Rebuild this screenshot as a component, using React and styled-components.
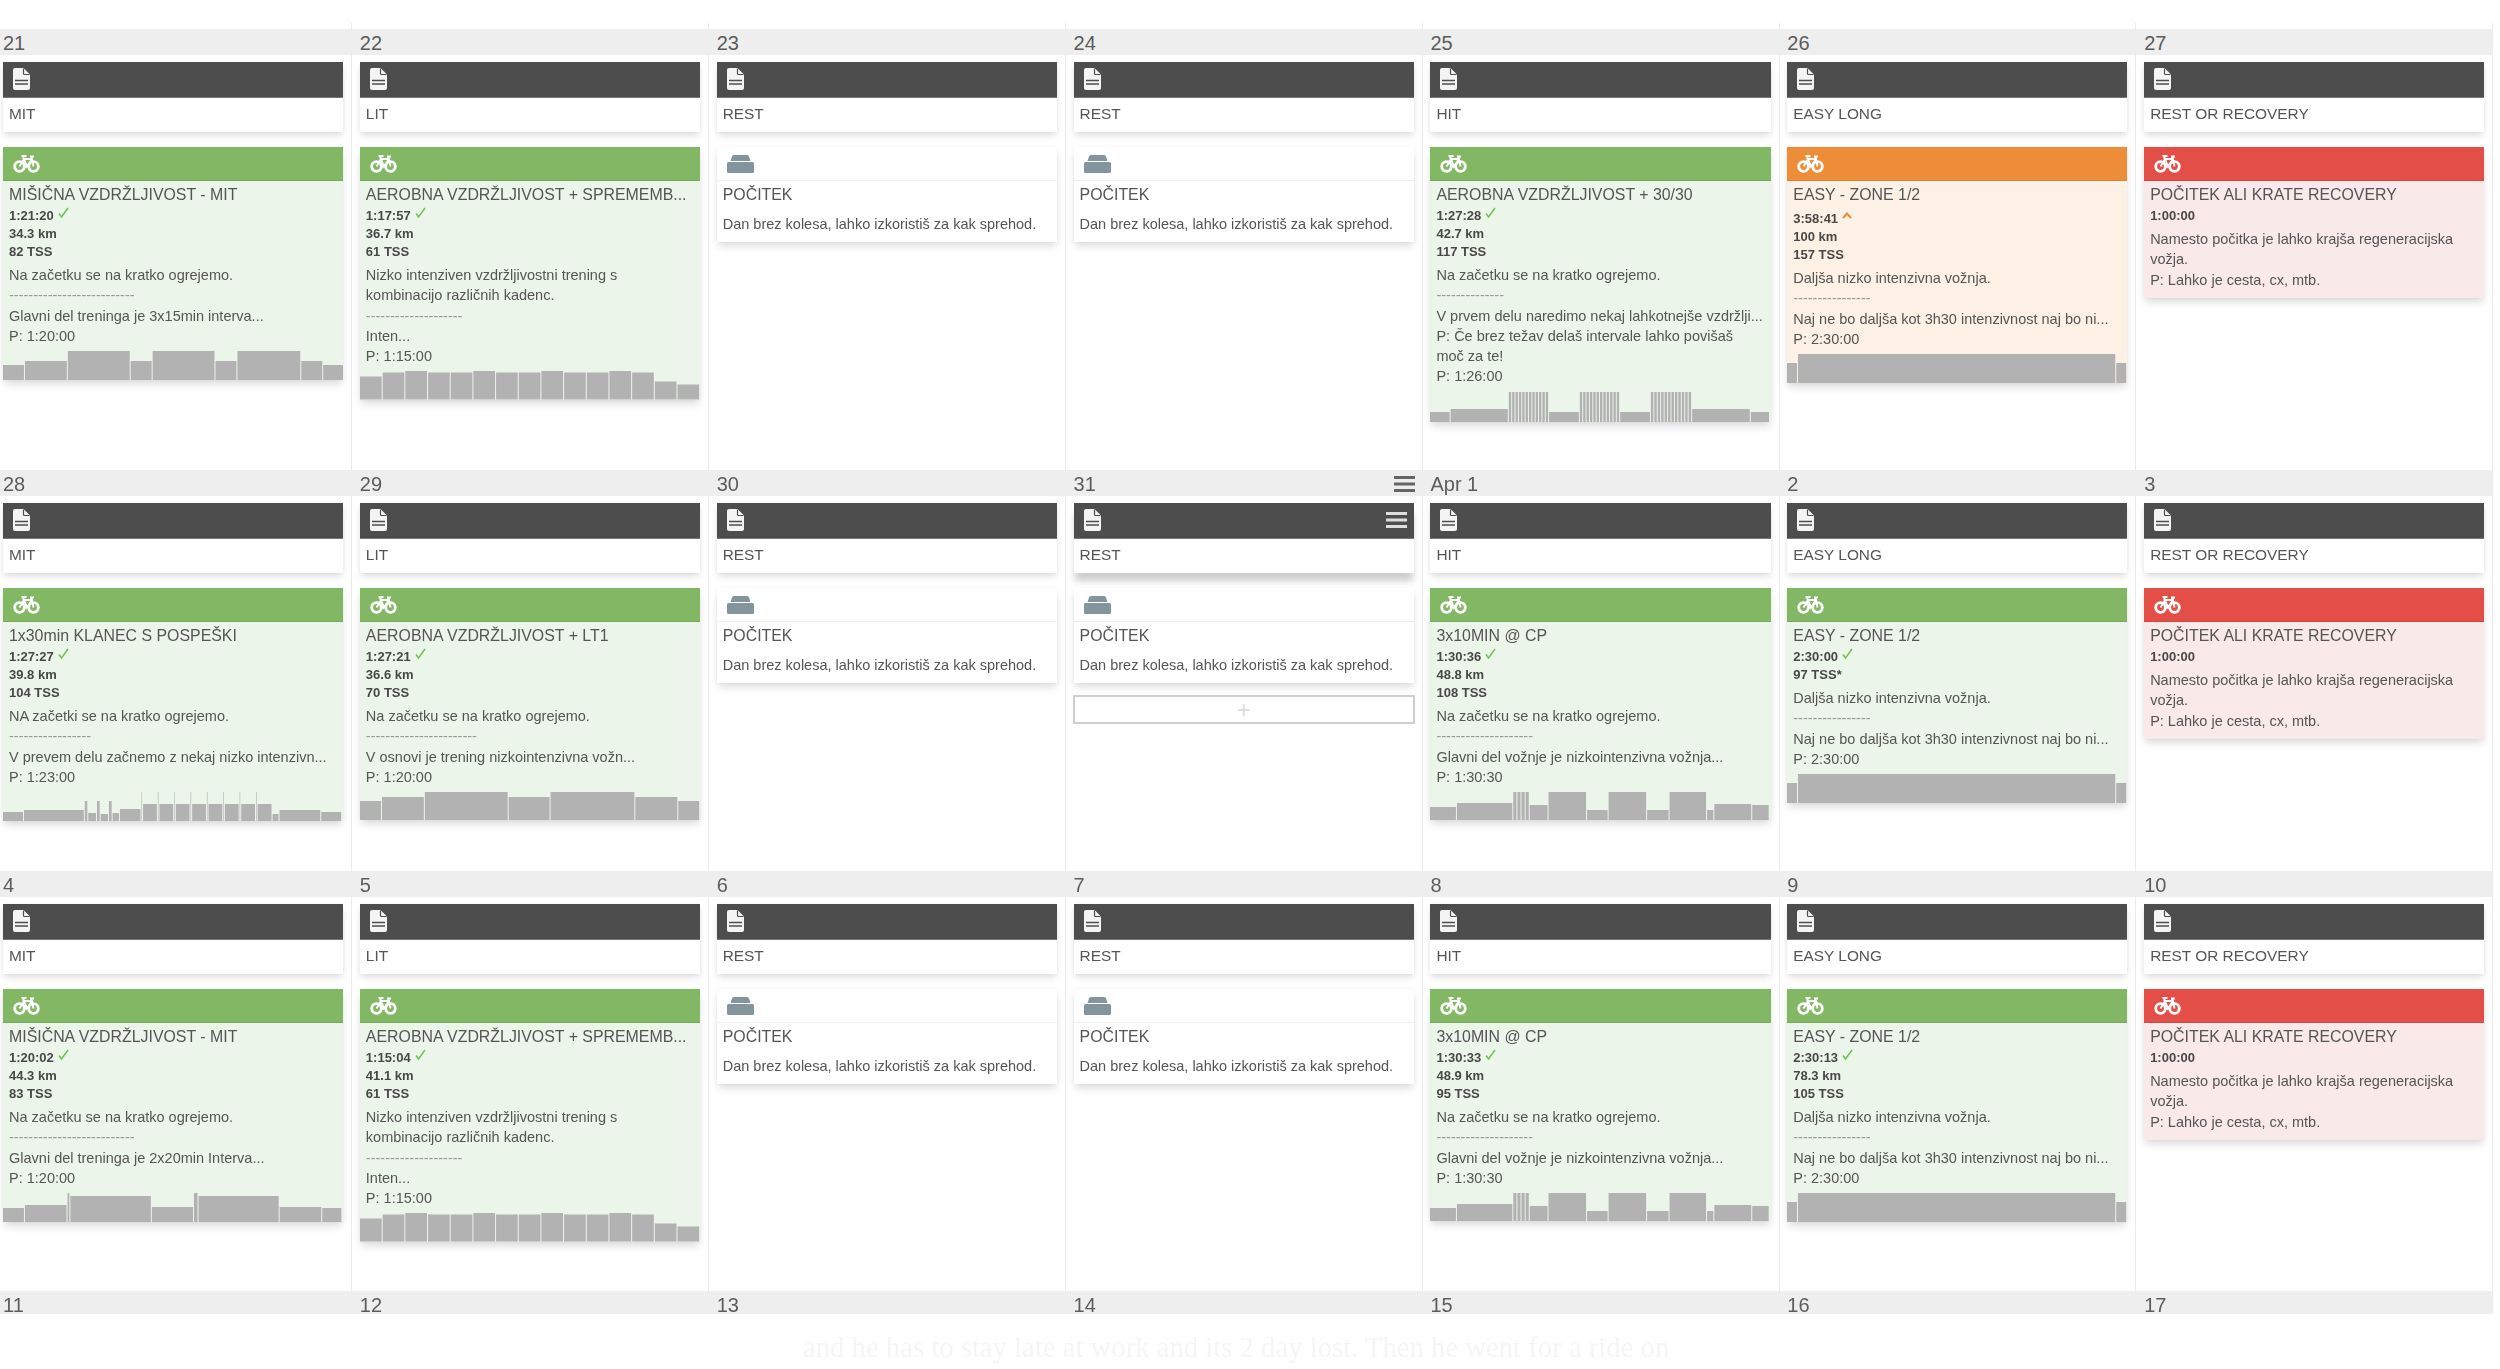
import React from 'react';
import styled, { createGlobalStyle, css } from 'styled-components';

const dashes = (n) => '-'.repeat(n);
const stripes = (total, n, h) => Array.from({ length: n }, () => [total / n, h]);

const WARMUP = 'Na začetku se na kratko ogrejemo.';
const LONG = 'Daljša nizko intenzivna vožnja.';
const LONG_NOTE = 'Naj ne bo daljša kot 3h30 intenzivnost naj bo ni...';
const MAIN_RIDE = 'Glavni del vožnje je nizkointenzivna vožnja...';

const CHART_MIT = [[22, 15], [43, 19], [63, 29], [22, 19], [63, 29], [22, 19], [64, 29], [22, 19], [21, 15]];
const CHART_CADENCE = [23, 27, 28.5, 27, 27, 28.5, 27, 27, 28.5, 27, 27, 28.5, 27, 18, 15].map((h) => [22.73, h]);
const CHART_3030 = [
  [20.7, 10], [58.3, 13], ...stripes(40.4, 12, 30), [30.8, 10], ...stripes(40.4, 12, 30), [30.8, 10],
  ...stripes(41.3, 12, 30), [58.8, 13], [19.3, 10],
];
const CHART_EASY = [[11, 20], [319, 29], [11, 20]];
const CHART_HILL = [
  [21, 9], [61, 11], [3.5, 20], [8.7, 8], [3.7, 20], [8.3, 7], [3.7, 20], [7.3, 8], [21.6, 12],
  ...Array.from({ length: 7 }).flatMap(() => [[1.6, 29], [14.8, 17]]),
  [1.6, 29], [15, 17], [7, 7], [41.8, 11], [21, 9],
];
const CHART_LT1 = [[22, 19], [43, 23], [84, 28], [42, 23], [85, 28], [43, 23], [22, 19]];
const CHART_CP = [
  [27, 13], [56.5, 17], ...stripes(16.5, 4, 28), [18.8, 15], [38.6, 28], [21.6, 10], [38.6, 28], [22.5, 10],
  [37.6, 28], [7.3, 10], [38, 16], [17.5, 15],
];
const CHART_2X20 = [[22, 14], [42.7, 17], [2.8, 29], [81.7, 26], [42.2, 15], [4.6, 29], [81.3, 26], [42.7, 15], [20.2, 14]];

const REST = { kind: 'rest', title: 'POČITEK', lines: ['Dan brez kolesa, lahko izkoristiš za kak sprehod.'] };
const RECOVERY = {
  kind: 'red',
  title: 'POČITEK ALI KRATE RECOVERY',
  stats: ['1:00:00'],
  lines: ['Namesto počitka je lahko krajša regeneracijska', 'vožja.', 'P: Lahko je cesta, cx, mtb.'],
};
const PLANS = ['MIT', 'LIT', 'REST', 'REST', 'HIT', 'EASY LONG', 'REST OR RECOVERY'];

const WEEKS = [
  {
    height: 415,
    labels: ['21', '22', '23', '24', '25', '26', '27'],
    workouts: [
      {
        kind: 'green', title: 'MIŠIČNA VZDRŽLJIVOST - MIT', stats: ['1:21:20', '34.3 km', '82 TSS'], mark: 'done',
        lines: [WARMUP, dashes(26), 'Glavni del treninga je 3x15min interva...', 'P: 1:20:00'], chart: CHART_MIT,
      },
      {
        kind: 'green', title: 'AEROBNA VZDRŽLJIVOST + SPREMEMB...', stats: ['1:17:57', '36.7 km', '61 TSS'], mark: 'done',
        lines: ['Nizko intenziven vzdržljivostni trening s', 'kombinacijo različnih kadenc.', dashes(20), 'Inten...', 'P: 1:15:00'],
        chart: CHART_CADENCE,
      },
      REST,
      REST,
      {
        kind: 'green', title: 'AEROBNA VZDRŽLJIVOST + 30/30', stats: ['1:27:28', '42.7 km', '117 TSS'], mark: 'done',
        lines: [WARMUP, dashes(14), 'V prvem delu naredimo nekaj lahkotnejše vzdržlji...', 'P: Če brez težav delaš intervale lahko povišaš', 'moč za te!', 'P: 1:26:00'],
        chart: CHART_3030,
      },
      {
        kind: 'orange', title: 'EASY - ZONE 1/2', stats: ['3:58:41', '100 km', '157 TSS'], mark: 'over',
        lines: [LONG, dashes(16), LONG_NOTE, 'P: 2:30:00'], chart: CHART_EASY,
      },
      RECOVERY,
    ],
  },
  {
    height: 375,
    labels: ['28', '29', '30', '31', 'Apr 1', '2', '3'],
    active: 3,
    workouts: [
      {
        kind: 'green', title: '1x30min KLANEC S POSPEŠKI', stats: ['1:27:27', '39.8 km', '104 TSS'], mark: 'done',
        lines: ['NA začetki se na kratko ogrejemo.', dashes(17), 'V prevem delu začnemo z nekaj nizko intenzivn...', 'P: 1:23:00'],
        chart: CHART_HILL,
      },
      {
        kind: 'green', title: 'AEROBNA VZDRŽLJIVOST + LT1', stats: ['1:27:21', '36.6 km', '70 TSS'], mark: 'done',
        lines: [WARMUP, dashes(23), 'V osnovi je trening nizkointenzivna vožn...', 'P: 1:20:00'], chart: CHART_LT1,
      },
      REST,
      REST,
      {
        kind: 'green', title: '3x10MIN @ CP', stats: ['1:30:36', '48.8 km', '108 TSS'], mark: 'done',
        lines: [WARMUP, dashes(20), MAIN_RIDE, 'P: 1:30:30'], chart: CHART_CP,
      },
      {
        kind: 'green', title: 'EASY - ZONE 1/2', stats: ['2:30:00', '97 TSS*'], mark: 'done',
        lines: [LONG, dashes(16), LONG_NOTE, 'P: 2:30:00'], chart: CHART_EASY,
      },
      RECOVERY,
    ],
  },
  {
    height: 394,
    labels: ['4', '5', '6', '7', '8', '9', '10'],
    workouts: [
      {
        kind: 'green', title: 'MIŠIČNA VZDRŽLJIVOST - MIT', stats: ['1:20:02', '44.3 km', '83 TSS'], mark: 'done',
        lines: [WARMUP, dashes(26), 'Glavni del treninga je 2x20min Interva...', 'P: 1:20:00'], chart: CHART_2X20,
      },
      {
        kind: 'green', title: 'AEROBNA VZDRŽLJIVOST + SPREMEMB...', stats: ['1:15:04', '41.1 km', '61 TSS'], mark: 'done',
        lines: ['Nizko intenziven vzdržljivostni trening s', 'kombinacijo različnih kadenc.', dashes(20), 'Inten...', 'P: 1:15:00'],
        chart: CHART_CADENCE,
      },
      REST,
      REST,
      {
        kind: 'green', title: '3x10MIN @ CP', stats: ['1:30:33', '48.9 km', '95 TSS'], mark: 'done',
        lines: [WARMUP, dashes(20), MAIN_RIDE, 'P: 1:30:30'], chart: CHART_CP,
      },
      {
        kind: 'green', title: 'EASY - ZONE 1/2', stats: ['2:30:13', '78.3 km', '105 TSS'], mark: 'done',
        lines: [LONG, dashes(16), LONG_NOTE, 'P: 2:30:00'], chart: CHART_EASY,
      },
      RECOVERY,
    ],
  },
];

function DocIcon() {
  return (
    <svg width="17" height="22" viewBox="0 0 17 22">
      <path d="M2 0h8.500L17 6.500V20a2 2 0 0 1-2 2H2a2 2 0 0 1-2-2V2a2 2 0 0 1 2-2z" fill="#f4f4f4" />
      <path d="M10.500 0.500v5a1 1 0 0 0 1 1h5" fill="none" stroke="#4d4d4d" strokeWidth="1.200" />
      <path d="M2 12.500h13M2 16h13" stroke="#4d4d4d" strokeWidth="1.400" />
    </svg>
  );
}

function BikeIcon() {
  return (
    <svg width="27" height="18" viewBox="0 0 27 18" fill="none" stroke="#fff">
      <circle cx="6.500" cy="11.500" r="4.800" strokeWidth="2.800" />
      <circle cx="20.500" cy="11.500" r="4.800" strokeWidth="2.800" />
      <path d="M6.500 11.500L11 4h8l1.500 7.500M11 4l3 7.500L19 4M12 11.500h2" strokeWidth="1.900" />
      <path d="M8.500 1h5M10.500 1v3M17 1.500h4M18.500 1.500V4" strokeWidth="2" />
    </svg>
  );
}

function RestIcon() {
  return (
    <svg width="27" height="18" viewBox="0 0 27 18" fill="#84949c">
      <path d="M7 0h13a2 2 0 0 1 2 1.500L23.500 6h-20L5 1.500A2 2 0 0 1 7 0z" />
      <path d="M1.500 7h24A1.500 1.500 0 0 1 27 8.500v8a1.500 1.500 0 0 1-1.500 1.500h-24A1.500 1.500 0 0 1 0 16.500v-8A1.500 1.500 0 0 1 1.500 7z" />
    </svg>
  );
}

function MenuIcon({ color }) {
  return (
    <svg width="21" height="16" viewBox="0 0 21 16" fill={color}>
      <rect width="21" height="3" />
      <rect y="6.500" width="21" height="3" />
      <rect y="13" width="21" height="3" />
    </svg>
  );
}

function Chart({ bars }) {
  const top = Math.max(...bars.map((b) => b[1]));
  let x = 0;
  return (
    <ChartBox viewBox={`0 0 341 ${top}`} preserveAspectRatio="none" $height={top}>
      {bars.map(([w, h], i) => {
        const rect = <rect key={i} x={x} y={top - h} width={Math.max(w - 1, 0.5)} height={h} fill="#b2b2b2" />;
        x += w;
        return rect;
      })}
    </ChartBox>
  );
}

function Workout({ kind, title, stats, mark, lines, chart }) {
  return (
    <WorkoutCard $kind={kind}>
      <WorkoutHead $kind={kind}>{kind === 'rest' ? <RestIcon /> : <BikeIcon />}</WorkoutHead>
      <WorkoutTitle>{title}</WorkoutTitle>
      {stats && (
        <Stats>
          {stats.map((stat, i) => (
            <Stat key={stat} $over={i === 0 && mark === 'over'}>
              {stat}
              {i === 0 && mark === 'done' && (
                <Mark width="11" height="11" viewBox="0 0 11 11" fill="none" stroke="#6fc353" strokeWidth="1.500">
                  <path d="M1 6.500l2.500 3.500L10 1" />
                </Mark>
              )}
              {i === 0 && mark === 'over' && (
                <Mark width="10" height="7" viewBox="0 0 10 7" fill="none" stroke="#ee8d38" strokeWidth="2">
                  <path d="M1 6l4-4.500L9 6" />
                </Mark>
              )}
            </Stat>
          ))}
        </Stats>
      )}
      <Notes $rest={kind === 'rest'} $chart={Boolean(chart)}>
        {lines.map((line, i) => (
          <Note key={i} $rule={line.startsWith('--')}>
            {line}
          </Note>
        ))}
      </Notes>
      {chart && <Chart bars={chart} />}
    </WorkoutCard>
  );
}

function Week({ week }) {
  return (
    <section>
      <Band>
        {week.labels.map((label, i) => (
          <DayLabel key={label}>
            {label}
            {week.active === i && <MenuIcon color="#666" />}
          </DayLabel>
        ))}
      </Band>
      <Columns $height={week.height}>
        {week.workouts.map((workout, i) => (
          <Column key={i}>
            <PlanCard $lifted={week.active === i}>
              <PlanHead>
                <DocIcon />
                {week.active === i && <MenuIcon color="#ddd" />}
              </PlanHead>
              <PlanTitle>{PLANS[i]}</PlanTitle>
            </PlanCard>
            <Workout {...workout} />
            {week.active === i && <AddBox>+</AddBox>}
          </Column>
        ))}
      </Columns>
    </section>
  );
}

export default function App() {
  return (
    <Page>
      <GlobalStyle />
      <TopStub>
        {PLANS.map((plan, i) => (
          <StubCell key={i} />
        ))}
      </TopStub>
      {WEEKS.map((week) => (
        <Week key={week.labels[0]} week={week} />
      ))}
      <Band $short>
        {['11', '12', '13', '14', '15', '16', '17'].map((label) => (
          <DayLabel key={label}>{label}</DayLabel>
        ))}
      </Band>
      <FadedText>and he has to stay late at work and its 2 day lost. Then he went for a ride on</FadedText>
    </Page>
  );
}

const GlobalStyle = createGlobalStyle`
  html, body {
    margin: 0;
    padding: 0;
    background: #fff;
    overflow: hidden;
  }
`;

const HEAD = {
  green: '#82b863',
  orange: '#ee8d38',
  red: '#e34f46',
  rest: '#fff',
};
const BODY = {
  green: '#ecf5ea',
  orange: '#fcf1e4',
  red: '#f9e9e9',
  rest: '#fff',
};

const weekGrid = css`
  display: grid;
  grid-template-columns: repeat(7, 1fr);
  margin-left: -4.67px;
  width: 2498px;
`;

const Page = styled.div`
  height: 1369px;
  padding-top: 23px;
  box-sizing: border-box;
  overflow: hidden;
  font-family: 'Liberation Sans', Arial, sans-serif;
  color: #555;
  filter: blur(0.6px);
`;
const TopStub = styled.div`
  ${weekGrid}
  height: 6px;
`;
const StubCell = styled.div`
  border-right: 1px solid #e8ebee;
`;
const Band = styled.div`
  ${weekGrid}
  height: ${(p) => (p.$short ? 23 : 26)}px;
  background: #eee;
`;
const DayLabel = styled.div`
  display: flex;
  justify-content: space-between;
  align-items: center;
  padding: 0 8px 0 7.670px;
  font-size: 20px;
  line-height: 28px;
  color: #5c5c5c;
`;
const Columns = styled.div`
  ${weekGrid}
  height: ${(p) => p.$height}px;
`;
const Column = styled.div`
  display: flex;
  flex-direction: column;
  padding: 7px 8px 0 7.670px;
  border-right: 1px solid #e8ebee;
  min-width: 0;
`;
const PlanCard = styled.div`
  background: #fff;
  box-shadow: ${(p) =>
    p.$lifted ? '0 9px 7px -1px rgba(0, 0, 0, 0.2)' : '0 4px 7px -1px rgba(0, 0, 0, 0.14), 0 0 3px rgba(0, 0, 0, 0.05)'};
`;
const PlanHead = styled.div`
  display: flex;
  justify-content: space-between;
  align-items: center;
  height: 36px;
  padding: 0 7px 2px 10px;
  box-sizing: border-box;
  background: #4d4d4d;
  border-bottom: 1px solid #777;
`;
const PlanTitle = styled.div`
  height: 34px;
  padding: 0 6px;
  font-size: 15.400px;
  line-height: 32px;
`;
const WorkoutCard = styled.div`
  margin-top: 15px;
  background: ${(p) => BODY[p.$kind]};
  box-shadow: 0 5px 8px -1px rgba(0, 0, 0, 0.14), 0 0 3px rgba(0, 0, 0, 0.05);
`;
const WorkoutHead = styled.div`
  display: flex;
  align-items: center;
  height: 34px;
  padding-left: 10px;
  box-sizing: border-box;
  background: ${(p) => HEAD[p.$kind]};
  border-bottom: 1px solid ${(p) => (p.$kind === 'rest' ? '#eee' : 'rgba(0, 0, 0, 0.08)')};
`;
const WorkoutTitle = styled.div`
  margin-top: 4px;
  padding: 0 6px;
  font-size: 15.900px;
  line-height: 20px;
  white-space: nowrap;
`;
const Stats = styled.div`
  margin-top: 1px;
  padding: 0 6px;
`;
const Stat = styled.div`
  display: flex;
  align-items: center;
  height: ${(p) => (p.$over ? 21 : 18)}px;
  padding-top: ${(p) => (p.$over ? 3 : 0)}px;
  box-sizing: border-box;
  font-size: 13px;
  font-weight: 700;
  color: #484848;
`;
const Mark = styled.svg`
  margin: -5px 0 0 4px;
`;
const Notes = styled.div`
  margin-top: ${(p) => (p.$rest ? 9 : 5)}px;
  padding: 0 6px ${(p) => (p.$chart ? 5 : 8)}px;
`;
const Note = styled.div`
  font-size: 14.500px;
  line-height: 20.300px;
  white-space: nowrap;
  color: ${(p) => (p.$rule ? '#999' : 'inherit')};
`;
const ChartBox = styled.svg`
  display: block;
  width: 100%;
  height: ${(p) => p.$height}px;
`;
const AddBox = styled.div`
  margin: 12px -1px 0;
  height: 29px;
  box-sizing: border-box;
  border: 2px solid #cfcfcf;
  background: #fff;
  text-align: center;
  font-size: 24px;
  line-height: 25px;
  font-weight: 300;
  color: #dcdcdc;
`;
const FadedText = styled.div`
  padding: 23px 0 0 803px;
  font-family: 'Liberation Serif', serif;
  font-size: 28.700px;
  line-height: 20px;
  white-space: nowrap;
  color: #f5f5f5;
`;
